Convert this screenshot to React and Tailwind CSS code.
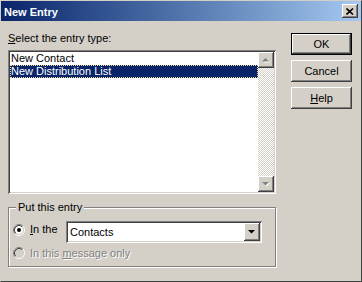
import React from 'react';

const raised = 'shadow-[inset_-1px_-1px_0_#404040,inset_1px_1px_0_#ffffff,inset_-2px_-2px_0_#808080,inset_2px_2px_0_#d4d0c8]';
const sunken = 'shadow-[inset_1px_1px_0_#808080,inset_-1px_-1px_0_#ffffff,inset_2px_2px_0_#404040,inset_-2px_-2px_0_#d4d0c8]';

function Radio({ checked, disabled }) {
  return (
    <svg width="12" height="12" viewBox="0 0 12 12" className="shrink-0">
      <circle cx="6" cy="6" r="4" fill={disabled ? '#d4d0c8' : '#ffffff'} />
      <path d="M2.11 9.89 A5.5 5.5 0 0 1 9.89 2.11" fill="none" stroke="#808080" />
      <path d="M9.89 2.11 A5.5 5.5 0 0 1 2.11 9.89" fill="none" stroke="#ffffff" />
      <path d="M2.82 9.18 A4.5 4.5 0 0 1 9.18 2.82" fill="none" stroke="#404040" />
      <path d="M9.18 2.82 A4.5 4.5 0 0 1 2.82 9.18" fill="none" stroke="#d4d0c8" />
      {checked && <circle cx="6" cy="6" r="2" fill="#000000" />}
    </svg>
  );
}

function Arrow({ down, color, shadow }) {
  const pts = down ? '4,6 11,6 7.5,9.5' : '4,9.5 11,9.5 7.5,6';
  return (
    <svg width="16" height="16" viewBox="0 0 16 16">
      {shadow && <polygon points={pts} transform="translate(1 1)" fill="#ffffff" />}
      <polygon points={pts} fill={color} />
    </svg>
  );
}

function Button({ children, isDefault }) {
  return (
    <div className={`w-[61px] h-[22px] ${isDefault ? 'border border-black' : ''}`}>
      <div className={`w-full h-full flex items-center justify-center leading-[13px] ${raised}`}>
        {children}
      </div>
    </div>
  );
}

export default function App() {
  return (
    <div className="w-[362px] h-[282px] bg-[#d4d0c8] border border-t-[#d4d0c8] border-l-[#d4d0c8] border-r-[#404040] border-b-[#404040] font-['Liberation_Sans',Arial,sans-serif] text-[11px] text-black flex flex-col overflow-hidden">
      {/* Title bar */}
      <div className="h-[20px] shrink-0 flex items-center justify-between pl-[3px] pr-[3px] bg-linear-to-r from-[#0a246a] to-[#a6caf0]">
        <span className="text-white font-bold text-[11px] pt-[2px]">New Entry</span>
        <div className={`w-[16px] h-[14px] bg-[#d4d0c8] flex items-center justify-center ${raised}`}>
          <svg width="8" height="7" viewBox="0 0 8 7">
            <path d="M0.5 0.5 L7 6.5 M7 0.5 L0.5 6.5" stroke="#000" strokeWidth="1.6" />
          </svg>
        </div>
      </div>

      {/* Body */}
      <div className="flex pl-[7px] pt-[11px]">
        <div className="w-[268px]">
          <div className="leading-[13px] h-[13px]">
            <u>S</u>elect the entry type:
          </div>

          {/* List box */}
          <div className={`mt-[5px] h-[144px] bg-white p-[2px] flex ${sunken}`}>
            <div className="flex-1 leading-[13px]">
              <div className="pl-px">New Contact</div>
              <div className="pl-px bg-[#0a246a] text-white outline outline-1 outline-dotted outline-[#f5db95] -outline-offset-1">
                New Distribution List
              </div>
            </div>
            <div className="w-[16px] flex flex-col justify-between bg-[image:repeating-conic-gradient(#d4d0c8_0_25%,#ffffff_0_50%)] bg-[length:2px_2px]">
              <div className={`h-[16px] bg-[#d4d0c8] ${raised}`}>
                <Arrow color="#808080" shadow />
              </div>
              <div className={`h-[16px] bg-[#d4d0c8] ${raised}`}>
                <Arrow down color="#808080" shadow />
              </div>
            </div>
          </div>

          {/* Group box */}
          <div className="relative mt-[13px] h-[60px] border border-[#808080] shadow-[inset_1px_1px_0_#ffffff,1px_1px_0_#ffffff] pl-[4px]">
            <span className="absolute left-[7px] -top-[7px] px-[2px] bg-[#d4d0c8] leading-[13px]">Put this entry</span>
            <div className="flex mt-[13px]">
              <div className="mt-[3px]"><Radio checked /></div>
              <span className="ml-[5px] w-[36px] mt-[2px] leading-[13px]"><u>I</u>n the</span>
              <div className={`w-[196px] h-[22px] bg-white p-[2px] flex ${sunken}`}>
                <span className="flex-1 pl-[2px] leading-[18px]">Contacts</span>
                <div className={`w-[16px] h-[18px] bg-[#d4d0c8] flex items-center justify-center ${raised}`}>
                  <Arrow down color="#000000" />
                </div>
              </div>
            </div>
            <div className="flex mt-[4px]">
              <Radio disabled />
              <span className="ml-[5px] leading-[13px] text-[#808080] [text-shadow:1px_1px_0_#ffffff]">
                In this <u>m</u>essage only
              </span>
            </div>
          </div>
        </div>

        {/* Buttons */}
        <div className="ml-[15px] mt-px flex flex-col gap-[5px]">
          <Button isDefault>OK</Button>
          <Button>Cancel</Button>
          <Button><span><u>H</u>elp</span></Button>
        </div>
      </div>
    </div>
  );
}
